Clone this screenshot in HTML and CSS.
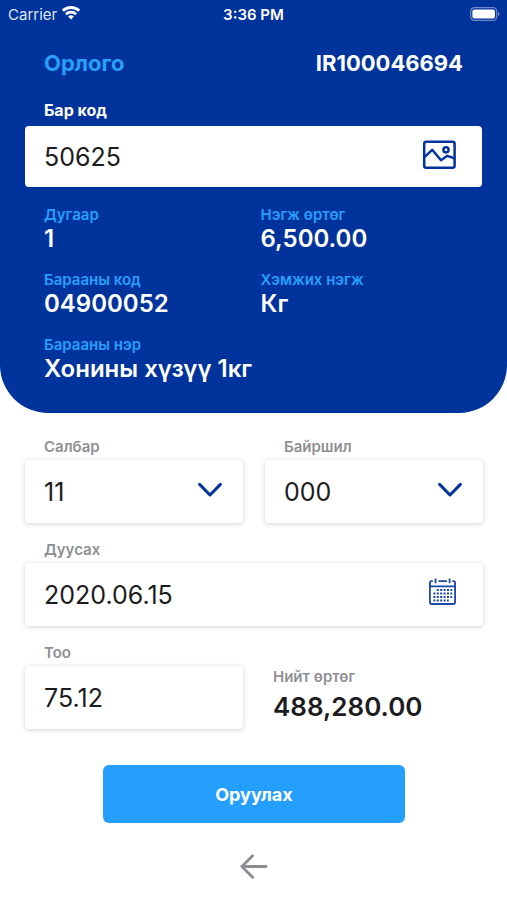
FILE: index.html
```html
<!DOCTYPE html>
<html lang="mn">
<head>
<meta charset="utf-8">
<meta name="viewport" content="width=device-width, initial-scale=1">
<title>Орлого</title>
<link rel="stylesheet" href="styles.css">
</head>
<body>
<header class="hero">
  <div class="status">
    <div class="carrier">
      <span>Carrier</span>
      <svg width="20" height="16" viewBox="0 0 20 16" aria-hidden="true" fill="none" stroke="#fff" stroke-width="2.8">
        <path d="M1.8 5.8a11.8 11.8 0 0 1 16.4 0"/>
        <path d="M4.9 9.2a7.4 7.4 0 0 1 10.2 0"/>
        <path d="M10 14.6l-2.9-3a4.2 4.2 0 0 1 5.8 0z" fill="#fff" stroke="none"/>
      </svg>
    </div>
    <time class="clock">3:36 PM</time>
    <svg class="battery" width="30" height="14" viewBox="0 0 30 14" aria-hidden="true">
      <rect x=".7" y=".7" width="26" height="12.6" rx="3.6" fill="none" stroke="#6f88c9" stroke-width="1.2"/>
      <rect x="2.4" y="2.4" width="22.6" height="9.2" rx="2" fill="#fff"/>
      <path d="M28 4.8c2 .8 2 3.6 0 4.4z" fill="#6f88c9"/>
    </svg>
  </div>

  <div class="title-row">
    <h1 class="title">Орлого</h1>
    <span class="doc-number">IR100046694</span>
  </div>

  <label class="barcode-label" for="barcode">Бар код</label>
  <div class="control control-flat">
    <input class="input" id="barcode" type="text" value="50625">
    <button class="icon-button" type="button" aria-label="Зураг">
      <svg width="34" height="30" viewBox="0 0 34 30" fill="none" stroke="#00339c" stroke-width="2.5" stroke-linejoin="round">
        <rect x="2.2" y="1.8" width="30.4" height="26" rx="2"/>
        <path d="M2.4 17.2l7.8-7.4 8.8 10.4 6.4-4.4 7 2.6"/>
        <circle cx="24" cy="9.8" r="2.6"/>
      </svg>
    </button>
  </div>

  <dl class="info">
    <div><dt>Дугаар</dt><dd>1</dd></div>
    <div><dt>Нэгж өртөг</dt><dd>6,500.00</dd></div>
    <div><dt>Барааны код</dt><dd>04900052</dd></div>
    <div><dt>Хэмжих нэгж</dt><dd>Кг</dd></div>
    <div class="wide"><dt>Барааны нэр</dt><dd>Хонины хүзүү 1кг</dd></div>
  </dl>
</header>

<main>
  <form class="form">
    <div class="field">
      <label for="branch">Салбар</label>
      <div class="control">
        <select class="input" id="branch"><option>11</option></select>
        <svg class="chevron" width="26" height="16" viewBox="0 0 26 16" aria-hidden="true"><path d="M2.6 2.4L13 13 23.4 2.4"/></svg>
      </div>
    </div>
    <div class="field">
      <label for="location">Байршил</label>
      <div class="control">
        <select class="input" id="location"><option>000</option></select>
        <svg class="chevron" width="26" height="16" viewBox="0 0 26 16" aria-hidden="true"><path d="M2.6 2.4L13 13 23.4 2.4"/></svg>
      </div>
    </div>
    <div class="field wide">
      <label for="expiry">Дуусах</label>
      <div class="control">
        <input class="input" id="expiry" type="text" value="2020.06.15">
        <button class="icon-button" type="button" aria-label="Огноо сонгох">
          <svg width="28" height="30" viewBox="0 0 28 30" fill="none" stroke="#1c48a6" stroke-width="1.8">
            <path d="M3.8 3.2H2.6A1.8 1.8 0 0 0 .9 5v19a2 2 0 0 0 2 2h21.2a2 2 0 0 0 2-2V5a1.8 1.8 0 0 0-1.7-1.8h-1.2M9.6 3.2h8.4M.9 8.4h25.2M6.6.6v4.6M20.6.6v4.6"/>
            <path d="M7.8 12h15.4M4.4 15.5h18.8M4.4 19h18.8M4.4 22.5h15.4" stroke-width="2" stroke-dasharray="2 1.4"/>
          </svg>
        </button>
      </div>
    </div>
    <div class="field">
      <label for="quantity">Тоо</label>
      <div class="control">
        <input class="input" id="quantity" type="text" value="75.12">
      </div>
    </div>
    <div class="total">
      <span class="total-label">Нийт өртөг</span>
      <output class="total-value" for="quantity">488,280.00</output>
    </div>
    <button class="submit" type="submit">Оруулах</button>
  </form>

  <a class="back" href="#" aria-label="Буцах">
    <svg width="28" height="28" viewBox="0 0 28 28" fill="none" stroke="#8c8c92" stroke-width="2.8" stroke-linecap="round" stroke-linejoin="round">
      <path d="M26 13.5H1.8M12.6 2.8L1.8 13.5l10.8 10.7"/>
    </svg>
  </a>
</main>
</body>
</html>
```
FILE: styles.css
```css
* {
  box-sizing: border-box;
}

body {
  margin: 0;
  background: #fff;
  color: #1c1c20;
  font-family: Inter, "Liberation Sans", sans-serif;
}

.hero {
  padding: 0 25px 30px;
  border-radius: 0 0 48px 48px;
  background: #00339c;
  color: #fff;
}

.status {
  display: grid;
  grid-template-columns: 1fr auto 1fr;
  align-items: center;
  height: 28px;
  margin: 0 -17px;
  font-size: 15px;
}

.carrier {
  display: flex;
  align-items: center;
  gap: 4px;
  color: #dfe6f5;
}

.carrier svg {
  margin-bottom: 2px;
}

.clock {
  font-weight: 600;
}

.battery {
  justify-self: end;
  margin-right: -1px;
}

.title-row {
  display: flex;
  justify-content: space-between;
  margin-top: 20px;
  padding: 0 19px;
  font-size: 22px;
  font-weight: 700;
  line-height: 30px;
}

.title {
  margin: 0;
  color: #279ffb;
  font: inherit;
}

.barcode-label {
  display: block;
  margin: 22px 19px 6px;
  font-size: 16px;
  font-weight: 700;
  line-height: 20px;
}

.control {
  display: flex;
  align-items: center;
  position: relative;
  height: 63px;
  border-radius: 4px;
  background: #fff;
  box-shadow: 0 1px 5px rgba(0, 0, 0, 0.18);
}

.control-flat {
  height: 61px;
  box-shadow: none;
}

.input {
  flex: 1;
  min-width: 0;
  height: 100%;
  margin: 0;
  padding: 0 19px;
  border: 0;
  border-radius: 4px;
  background: transparent;
  color: #1c1c20;
  font-family: inherit;
  font-size: 25px;
  appearance: none;
}

.icon-button {
  display: flex;
  margin: 0 26px 0 0;
  padding: 0 0 4px;
  border: 0;
  background: none;
  cursor: pointer;
}

.icon-button svg,
.back svg {
  display: block;
}

.chevron {
  position: absolute;
  right: 20px;
  top: 22px;
  fill: none;
  stroke: #00339c;
  stroke-width: 3;
  stroke-linecap: round;
  stroke-linejoin: round;
  pointer-events: none;
}

.info {
  display: grid;
  grid-template-columns: 1fr 1fr;
  gap: 18px 14px;
  margin: 19px 19px 0;
}

.wide {
  grid-column: 1 / -1;
}

.info dt {
  color: #279ffb;
  font-size: 15px;
  font-weight: 600;
  line-height: 18px;
}

.info dd {
  margin: 1px 0 0;
  font-size: 24px;
  font-weight: 600;
  line-height: 28px;
}

.form {
  display: grid;
  grid-template-columns: repeat(2, minmax(0, 1fr));
  gap: 17px 22px;
  padding: 24px 24px 0 25px;
}

.field label {
  display: block;
  margin: 0 19px 3px;
  color: #8f8f95;
  font-size: 15px;
  font-weight: 600;
  line-height: 20px;
}

.total {
  display: flex;
  flex-direction: column;
  align-self: end;
  gap: 7px;
  padding: 0 0 8px 8px;
}

.total-label {
  color: #8f8f95;
  font-size: 15px;
  font-weight: 600;
  line-height: 18px;
}

.total-value {
  font-size: 26px;
  font-weight: 600;
  line-height: 28px;
}

.submit {
  grid-column: 1 / -1;
  justify-self: center;
  width: 66%;
  height: 58px;
  margin-top: 19px;
  border: 0;
  border-radius: 6px;
  background: #259fff;
  color: #fff;
  font-family: inherit;
  font-size: 18px;
  font-weight: 700;
  cursor: pointer;
}

.back {
  display: block;
  width: 28px;
  margin: 30px auto 0;
}
```
